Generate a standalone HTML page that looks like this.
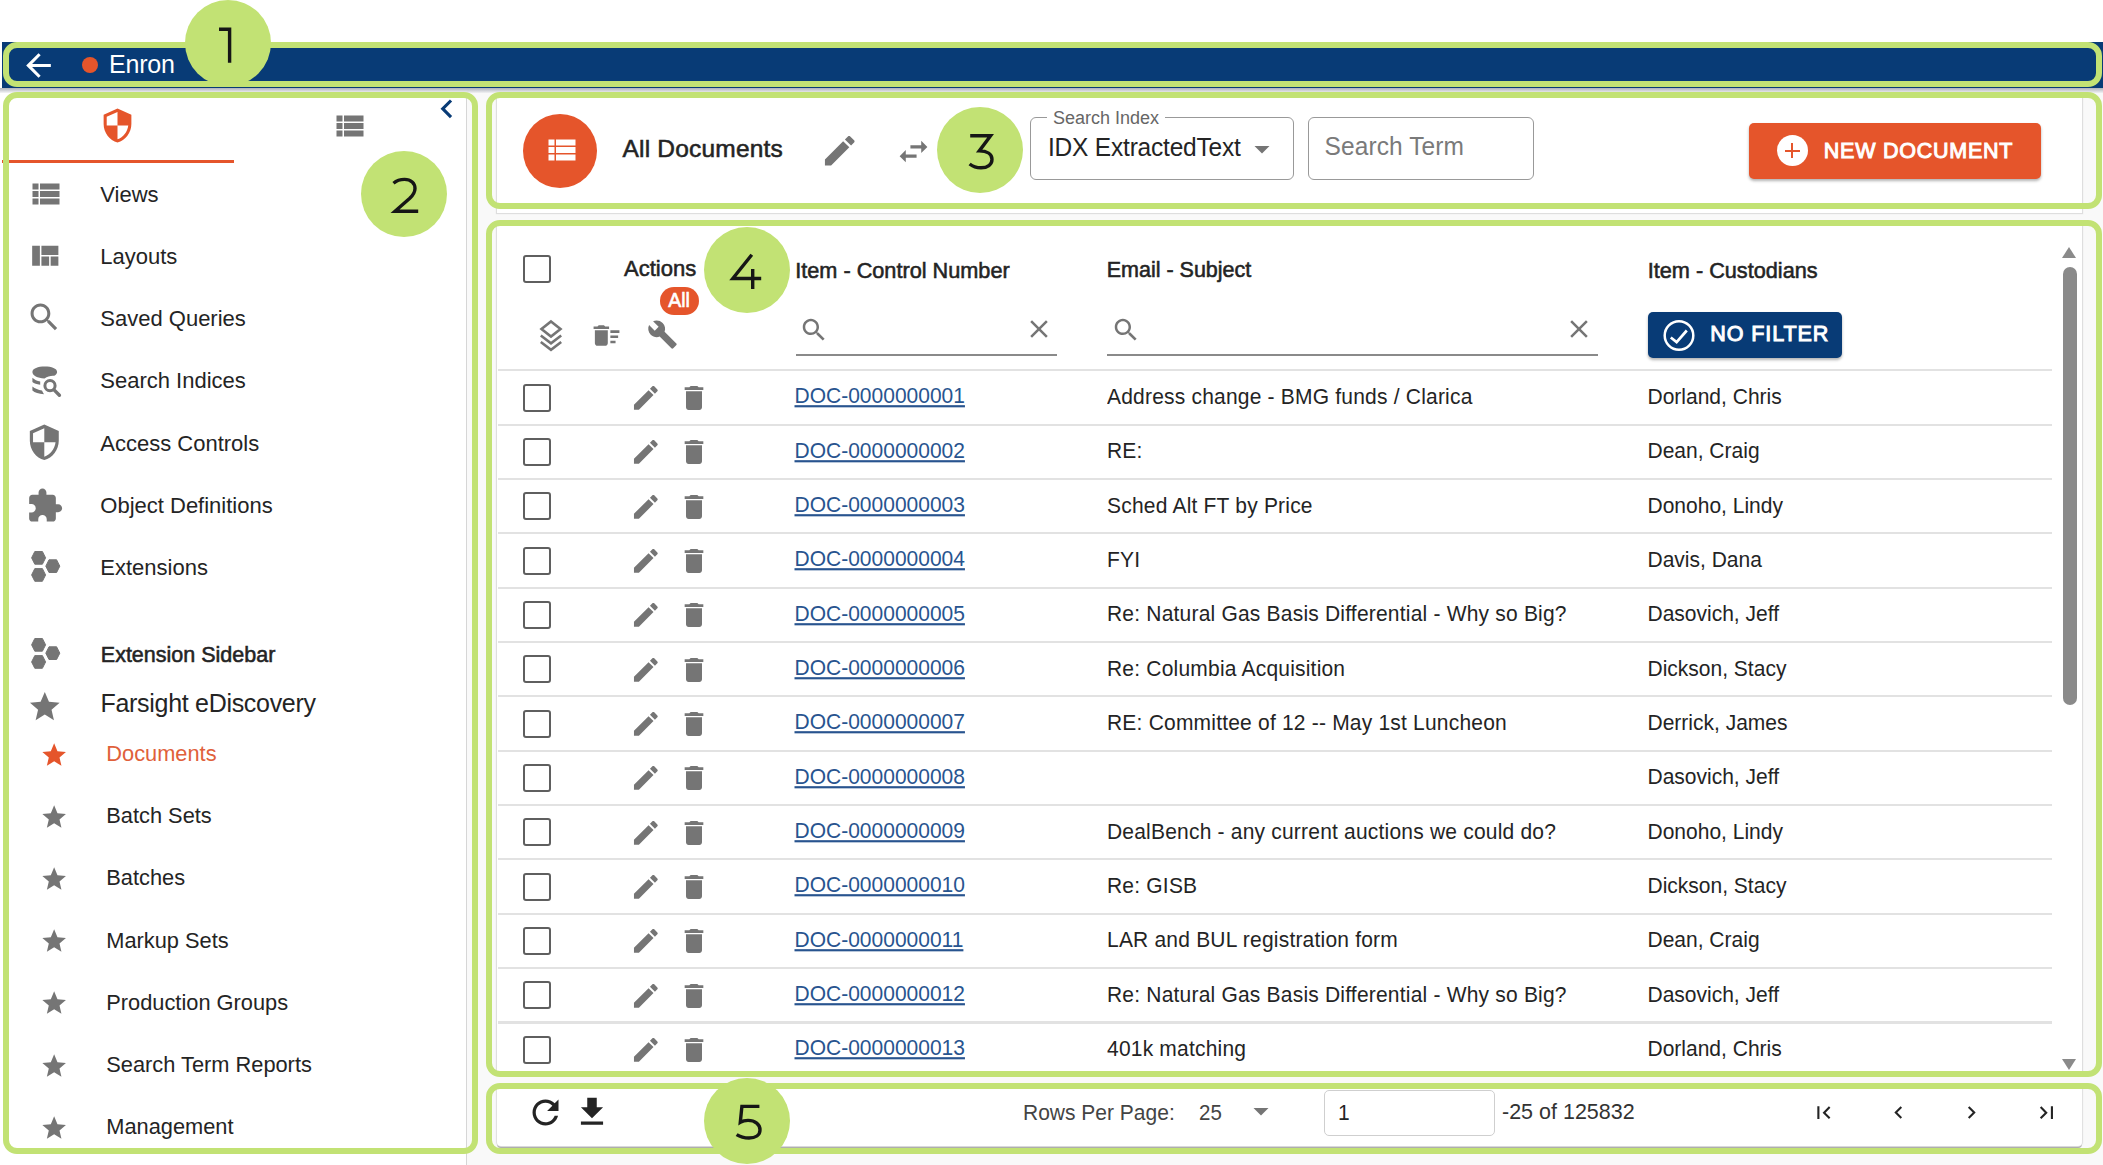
<!DOCTYPE html>
<html><head><meta charset="utf-8">
<style>
*{box-sizing:border-box;margin:0;padding:0}
html,body{width:2103px;height:1165px;overflow:hidden;background:#fff}
body{font-family:"Liberation Sans",sans-serif;color:#212121;position:relative}
.a{position:absolute;display:block}
.t{position:absolute;white-space:nowrap;line-height:1}
.card{position:absolute;background:#fff;box-shadow:0 0 1px 1px #dedede}
.gb{position:absolute;border:6px solid #c2e274;border-radius:14px}
.num{position:absolute;width:86px;height:86px;border-radius:50%;background:#c2e274}
.cb{position:absolute;width:28px;height:28px;border:2.6px solid #5f5f5f;border-radius:3px}
.hl{position:absolute;height:2px;background:#e2e2e2}
</style></head><body>

<div class="a" style="left:467px;top:88px;width:1636px;height:1077px;background:#f9f9f9"></div>
<div class="a" style="left:2px;top:42px;width:2101px;height:46px;background:#083b76"></div>
<div class="a" style="left:0;top:88px;width:2103px;height:5px;background:linear-gradient(#aeb2bb,rgba(230,230,235,.4))"></div>
<svg class="a" style="left:20.2px;top:46.9px;" width="37" height="37" viewBox="0 0 24 24"><path fill="#fff" d="M20 11H7.83l5.59-5.59L12 4l-8 8 8 8 1.41-1.41L7.83 13H20v-2z"/></svg>
<div class="a" style="left:81.7px;top:57.3px;width:16px;height:16px;border-radius:50%;background:#e5552b"></div>
<div class="t" style="left:109.0px;top:51.8px;font-size:25px;font-weight:400;color:#fff;letter-spacing:-0.2px">Enron</div>
<div class="a" style="left:466px;top:93px;width:1px;height:1072px;background:#d6d6d6"></div>
<svg class="a" style="left:99.3px;top:106.8px;" width="37" height="37" viewBox="0 0 24 24"><path fill="#e5552b" d="M12 1L3 5v6c0 5.55 3.84 10.74 9 12 5.16-1.26 9-6.45 9-12V5l-9-4zm0 10.99h7c-.53 4.12-3.28 7.79-7 8.94V12H5V6.3l7-3.11v8.8z"/></svg>
<svg class="a" style="left:332.0px;top:107.8px;" width="36" height="36" viewBox="0 0 24 24"><path fill="#757575" d="M3 14h4v-4H3v4zm0 5h4v-4H3v4zM3 9h4V5H3v4zm5 5h13v-4H8v4zm0 5h13v-4H8v4zM8 5v4h13V5H8z"/></svg>
<div class="a" style="left:2px;top:159.5px;width:232px;height:3.5px;background:#e5552b"></div>
<svg class="a" style="left:428.0px;top:90.0px;" width="37.6" height="37.6" viewBox="0 0 24 24"><path fill="#083b76" d="M15.41 7.41L14 6l-6 6 6 6 1.41-1.41L10.83 12z"/></svg>
<svg class="a" style="left:27.7px;top:175.8px;" width="36" height="36" viewBox="0 0 24 24"><path fill="#757575" d="M3 14h4v-4H3v4zm0 5h4v-4H3v4zM3 9h4V5H3v4zm5 5h13v-4H8v4zm0 5h13v-4H8v4zM8 5v4h13V5H8z"/></svg>
<div class="t" style="left:100.3px;top:184.2px;font-size:22px;font-weight:400;color:#242424;">Views</div>
<svg class="a" style="left:26.1px;top:237.6px;" width="37" height="37" viewBox="0 0 24 24"><path fill="#757575" d="M10 18h5v-6h-5v6zm-6 0h5V5H4v13zm12 0h5v-6h-5v6zM10 5v6h11V5H10z"/></svg>
<div class="t" style="left:100.3px;top:246.4px;font-size:22px;font-weight:400;color:#242424;">Layouts</div>
<svg class="a" style="left:26.3px;top:299.4px;" width="36.5" height="36.5" viewBox="0 0 24 24"><path fill="#757575" d="M15.5 14h-.79l-.28-.27C15.41 12.59 16 11.11 16 9.5 16 5.91 13.09 3 9.5 3S3 5.91 3 9.5 5.91 16 9.5 16c1.61 0 3.09-.59 4.23-1.57l.27.28v.79l5 4.99L20.49 19l-4.99-5zm-6 0C7.01 14 5 11.99 5 9.5S7.01 5 9.5 5 14 7.01 14 9.5 11.99 14 9.5 14z"/></svg>
<div class="t" style="left:100.3px;top:308.1px;font-size:22px;font-weight:400;color:#242424;">Saved Queries</div>
<div class="t" style="left:100.3px;top:369.9px;font-size:22px;font-weight:400;color:#242424;">Search Indices</div>
<svg class="a" style="left:25.4px;top:423.4px;" width="38.6" height="38.6" viewBox="0 0 24 24"><path fill="#757575" d="M12 1L3 5v6c0 5.55 3.84 10.74 9 12 5.16-1.26 9-6.45 9-12V5l-9-4zm0 10.99h7c-.53 4.12-3.28 7.79-7 8.94V12H5V6.3l7-3.11v8.8z"/></svg>
<div class="t" style="left:100.3px;top:433.2px;font-size:22px;font-weight:400;color:#242424;">Access Controls</div>
<svg class="a" style="left:25.7px;top:486.7px;" width="37.7" height="37.7" viewBox="0 0 24 24"><path fill="#757575" d="M20.5 11H19V7c0-1.1-.9-2-2-2h-4V3.5C13 2.12 11.88 1 10.5 1S8 2.12 8 3.5V5H4c-1.1 0-1.99.9-1.99 2v3.8H3.5c1.49 0 2.7 1.21 2.7 2.7s-1.21 2.7-2.7 2.7H2V20c0 1.1.9 2 2 2h3.8v-1.5c0-1.49 1.21-2.7 2.7-2.7 1.49 0 2.7 1.21 2.7 2.7V22H17c1.1 0 2-.9 2-2v-4h1.5c1.38 0 2.5-1.12 2.5-2.5S21.88 11 20.5 11z"/></svg>
<div class="t" style="left:100.3px;top:494.8px;font-size:22px;font-weight:400;color:#242424;">Object Definitions</div>
<div class="t" style="left:100.3px;top:556.8px;font-size:22px;font-weight:400;color:#242424;">Extensions</div>
<svg class="a" style="left:30.9px;top:551.4px" width="31" height="32" viewBox="0 0 31 32"><g fill="#757575" stroke="#757575" stroke-width="1" stroke-linejoin="round"><path d="M3.8 .5h7.6l3.2 6.35-3.2 6.35H3.8L.6 6.85z"/><path d="M3.8 17.6h7.6l3.2 6.35-3.2 6.35H3.8L.6 23.95z"/><path d="M18 8.8h7.6l3.2 6.35-3.2 6.35H18l-3.2-6.35z"/></g></svg>
<svg class="a" style="left:30.6px;top:638.4px" width="31" height="32" viewBox="0 0 31 32"><g fill="#757575" stroke="#757575" stroke-width="1" stroke-linejoin="round"><path d="M3.8 .5h7.6l3.2 6.35-3.2 6.35H3.8L.6 6.85z"/><path d="M3.8 17.6h7.6l3.2 6.35-3.2 6.35H3.8L.6 23.95z"/><path d="M18 8.8h7.6l3.2 6.35-3.2 6.35H18l-3.2-6.35z"/></g></svg>
<svg class="a" style="left:20px;top:355px" width="50" height="50" viewBox="0 0 50 50"><g fill="#757575"><path d="M12.4 17C12.4 13.6 18 11.6 24.8 11.6S37.1 13.6 37.1 17c0 1.5-1 2.8-2.8 3.8-3.5-.3-6.8.6-9.8 2.6C17.5 23.2 12.4 20.6 12.4 17z"/><path d="M12.4 22.8c2 2 4.8 3.3 7.8 3.8v3.2c-3.4-.5-6.2-1.5-7.8-2.8z"/><path d="M12.4 31.6c2.5 2 6 3.4 9.6 4 .6 1.3 1.3 2.6 2 3.7-5.2-.4-9.4-1.8-11.6-3.8z"/></g><circle cx="30" cy="30.7" r="5.1" fill="none" stroke="#757575" stroke-width="3"/><path d="M33.8 34.6l5.6 5.6" stroke="#757575" stroke-width="3.4" stroke-linecap="round"/></svg>
<div class="t" style="left:100.8px;top:644.5px;font-size:21.5px;font-weight:400;color:#242424;-webkit-text-stroke:0.55px #242424;">Extension Sidebar</div>
<svg class="a" style="left:26.9px;top:688.6px;" width="35.6" height="35.6" viewBox="0 0 24 24"><path fill="#757575" d="M12 17.27L18.18 21l-1.64-7.03L22 9.24l-7.19-.61L12 2 9.19 8.63 2 9.24l5.46 4.73L5.82 21z"/></svg>
<div class="t" style="left:100.5px;top:691.0px;font-size:25px;font-weight:400;color:#242424;letter-spacing:-0.3px">Farsight eDiscovery</div>
<svg class="a" style="left:39.6px;top:741.0px;" width="28.3" height="28.3" viewBox="0 0 24 24"><path fill="#e5552b" d="M12 17.27L18.18 21l-1.64-7.03L22 9.24l-7.19-.61L12 2 9.19 8.63 2 9.24l5.46 4.73L5.82 21z"/></svg>
<div class="t" style="left:106.3px;top:743.2px;font-size:21.8px;font-weight:400;color:#e0603a;">Documents</div>
<svg class="a" style="left:39.6px;top:803.1px;" width="28.3" height="28.3" viewBox="0 0 24 24"><path fill="#757575" d="M12 17.27L18.18 21l-1.64-7.03L22 9.24l-7.19-.61L12 2 9.19 8.63 2 9.24l5.46 4.73L5.82 21z"/></svg>
<div class="t" style="left:106.3px;top:805.3px;font-size:21.8px;font-weight:400;color:#242424;">Batch Sets</div>
<svg class="a" style="left:39.6px;top:865.2px;" width="28.3" height="28.3" viewBox="0 0 24 24"><path fill="#757575" d="M12 17.27L18.18 21l-1.64-7.03L22 9.24l-7.19-.61L12 2 9.19 8.63 2 9.24l5.46 4.73L5.82 21z"/></svg>
<div class="t" style="left:106.3px;top:867.4px;font-size:21.8px;font-weight:400;color:#242424;">Batches</div>
<svg class="a" style="left:39.6px;top:927.3px;" width="28.3" height="28.3" viewBox="0 0 24 24"><path fill="#757575" d="M12 17.27L18.18 21l-1.64-7.03L22 9.24l-7.19-.61L12 2 9.19 8.63 2 9.24l5.46 4.73L5.82 21z"/></svg>
<div class="t" style="left:106.3px;top:929.5px;font-size:21.8px;font-weight:400;color:#242424;">Markup Sets</div>
<svg class="a" style="left:39.6px;top:989.4px;" width="28.3" height="28.3" viewBox="0 0 24 24"><path fill="#757575" d="M12 17.27L18.18 21l-1.64-7.03L22 9.24l-7.19-.61L12 2 9.19 8.63 2 9.24l5.46 4.73L5.82 21z"/></svg>
<div class="t" style="left:106.3px;top:991.6px;font-size:21.8px;font-weight:400;color:#242424;">Production Groups</div>
<svg class="a" style="left:39.6px;top:1051.5px;" width="28.3" height="28.3" viewBox="0 0 24 24"><path fill="#757575" d="M12 17.27L18.18 21l-1.64-7.03L22 9.24l-7.19-.61L12 2 9.19 8.63 2 9.24l5.46 4.73L5.82 21z"/></svg>
<div class="t" style="left:106.3px;top:1053.7px;font-size:21.8px;font-weight:400;color:#242424;">Search Term Reports</div>
<svg class="a" style="left:39.6px;top:1113.6px;" width="28.3" height="28.3" viewBox="0 0 24 24"><path fill="#757575" d="M12 17.27L18.18 21l-1.64-7.03L22 9.24l-7.19-.61L12 2 9.19 8.63 2 9.24l5.46 4.73L5.82 21z"/></svg>
<div class="t" style="left:106.3px;top:1115.8px;font-size:21.8px;font-weight:400;color:#242424;">Management</div>
<div class="card" style="left:497px;top:96px;width:1585px;height:117px"></div>
<div class="a" style="left:523.4px;top:113.6px;width:74px;height:74px;border-radius:50%;background:#e5552b"></div>
<svg class="a" style="left:543.5px;top:131.8px;" width="36" height="36" viewBox="0 0 24 24"><path fill="#fff" d="M3 14h4v-4H3v4zm0 5h4v-4H3v4zM3 9h4V5H3v4zm5 5h13v-4H8v4zm0 5h13v-4H8v4zM8 5v4h13V5H8z"/></svg>
<div class="t" style="left:622.5px;top:137.2px;font-size:24.5px;font-weight:400;color:#242424;-webkit-text-stroke:0.55px #242424;letter-spacing:0.2px">All Documents</div>
<svg class="a" style="left:820.0px;top:130.8px;" width="39.5" height="39.5" viewBox="0 0 24 24"><path fill="#757575" d="M3 17.25V21h3.75L17.81 9.94l-3.75-3.75L3 17.25zM20.71 7.04c.39-.39.39-1.02 0-1.41l-2.34-2.34c-.39-.39-1.02-.39-1.41 0l-1.83 1.83 3.75 3.75 1.83-1.83z"/></svg>
<svg class="a" style="left:895.2px;top:133.2px;" width="37" height="37" viewBox="0 0 24 24"><path fill="#757575" d="M6.99 11L3 15l3.99 4v-3H14v-2H6.99v-3zM21 9l-3.99-4v3H10v2h7.01v3L21 9z"/></svg>
<div class="a" style="left:1030px;top:117px;width:264px;height:63px;border:1.8px solid #999;border-radius:6px"></div>
<div class="a" style="left:1047px;top:110px;width:118px;height:10px;background:#fff"></div>
<div class="t" style="left:1053.0px;top:109.1px;font-size:18px;font-weight:400;color:#666;">Search Index</div>
<div class="t" style="left:1048.0px;top:136.2px;font-size:24.5px;font-weight:400;color:#242424;transform:scaleY(1.07);transform-origin:0 85%;letter-spacing:-0.2px">IDX ExtractedText</div>
<svg class="a" style="left:1250.2px;top:136.6px;transform:scale(1.5);transform-origin:50% 50%" width="24" height="24" viewBox="0 0 24 24"><path fill="#757575" d="M7 10l5 5 5-5z"/></svg>
<div class="a" style="left:1308px;top:117px;width:226px;height:63px;border:1.8px solid #999;border-radius:6px"></div>
<div class="t" style="left:1324.5px;top:135.2px;font-size:24.5px;font-weight:400;color:#7a7a7a;transform:scaleY(1.07);transform-origin:0 85%;letter-spacing:0.1px">Search Term</div>
<div class="a" style="left:1749px;top:123px;width:292px;height:56px;border-radius:5px;background:#e5552b;box-shadow:0 2px 3px rgba(0,0,0,.3)"></div>
<div class="a" style="left:1776.5px;top:135.2px;width:31px;height:31px;border-radius:50%;background:#fff"></div>
<div class="a" style="left:1784.5px;top:149.6px;width:15.5px;height:2.3px;background:#e5552b"></div>
<div class="a" style="left:1791px;top:143px;width:2.3px;height:15.2px;background:#e5552b"></div>
<div class="t" style="left:1823.8px;top:140.5px;font-size:21.5px;font-weight:400;color:#fff;-webkit-text-stroke:1.0px #fff;letter-spacing:0.75px">NEW DOCUMENT</div>
<div class="card" style="left:497px;top:224px;width:1585px;height:848px"></div>
<div class="cb" style="left:523.2px;top:255px"></div>
<div class="t" style="left:624.0px;top:258.3px;font-size:22px;font-weight:400;color:#242424;-webkit-text-stroke:0.55px #242424;">Actions</div>
<div class="a" style="left:660.4px;top:287.2px;width:39px;height:28.2px;border-radius:14px;background:#e5552b"></div>
<div class="t" style="left:668.2px;top:290.9px;font-size:19.5px;font-weight:400;color:#fff;-webkit-text-stroke:0.6px #fff;">All</div>
<svg class="a" style="left:538px;top:319px" width="26" height="33" viewBox="0 0 26 33"><g fill="none" stroke="#757575" stroke-width="2.6" stroke-linejoin="miter"><path d="M13 2.5L22.5 10 13 17.5 3.5 10z"/><path d="M2.8 16.5L13 24.3 23.2 16.5"/><path d="M2.8 23L13 30.8 23.2 23"/></g></svg>
<svg class="a" style="left:591.4px;top:320.3px;" width="31" height="31" viewBox="0 0 24 24"><path fill="#757575" d="M15 16h4v2h-4zm0-8h7v2h-7zm0 4h6v2h-6zM3 18c0 1.1.9 2 2 2h6c1.1 0 2-.9 2-2V8H3v10zM14 5h-3l-1-1H6L5 5H2v2h12z"/></svg>
<svg class="a" style="left:647.3px;top:318.7px;" width="31" height="31" viewBox="0 0 24 24"><path fill="#757575" d="M22.7 19l-9.1-9.1c.9-2.3.4-5-1.5-6.9-2-2-5-2.4-7.4-1.3L9 6 6 9 1.6 4.7C.4 7.1.9 10.1 2.9 12.1c1.9 1.9 4.6 2.4 6.9 1.5l9.1 9.1c.4.4 1 .4 1.4 0l2.3-2.3c.5-.4.5-1.1.1-1.4z"/></svg>
<div class="t" style="left:795.2px;top:259.9px;font-size:21.7px;font-weight:400;color:#242424;-webkit-text-stroke:0.55px #242424;">Item - Control Number</div>
<div class="t" style="left:1106.7px;top:260.0px;font-size:21.5px;font-weight:400;color:#242424;-webkit-text-stroke:0.55px #242424;">Email - Subject</div>
<div class="t" style="left:1647.7px;top:259.8px;font-size:21.7px;font-weight:400;color:#242424;-webkit-text-stroke:0.55px #242424;">Item - Custodians</div>
<svg class="a" style="left:798.5px;top:314.8px;" width="30" height="30" viewBox="0 0 24 24"><path fill="#757575" d="M15.5 14h-.79l-.28-.27C15.41 12.59 16 11.11 16 9.5 16 5.91 13.09 3 9.5 3S3 5.91 3 9.5 5.91 16 9.5 16c1.61 0 3.09-.59 4.23-1.57l.27.28v.79l5 4.99L20.49 19l-4.99-5zm-6 0C7.01 14 5 11.99 5 9.5S7.01 5 9.5 5 14 7.01 14 9.5 11.99 14 9.5 14z"/></svg>
<svg class="a" style="left:1024.0px;top:314.2px;" width="30" height="30" viewBox="0 0 24 24"><path fill="#757575" d="M19 6.41L17.59 5 12 10.59 6.41 5 5 6.41 10.59 12 5 17.59 6.41 19 12 13.41 17.59 19 19 17.59 13.41 12z"/></svg>
<div class="a" style="left:796px;top:354px;width:261px;height:2px;background:#8a8a8a"></div>
<svg class="a" style="left:1111.2px;top:314.8px;" width="30" height="30" viewBox="0 0 24 24"><path fill="#757575" d="M15.5 14h-.79l-.28-.27C15.41 12.59 16 11.11 16 9.5 16 5.91 13.09 3 9.5 3S3 5.91 3 9.5 5.91 16 9.5 16c1.61 0 3.09-.59 4.23-1.57l.27.28v.79l5 4.99L20.49 19l-4.99-5zm-6 0C7.01 14 5 11.99 5 9.5S7.01 5 9.5 5 14 7.01 14 9.5 11.99 14 9.5 14z"/></svg>
<svg class="a" style="left:1564.0px;top:314.2px;" width="30" height="30" viewBox="0 0 24 24"><path fill="#757575" d="M19 6.41L17.59 5 12 10.59 6.41 5 5 6.41 10.59 12 5 17.59 6.41 19 12 13.41 17.59 19 19 17.59 13.41 12z"/></svg>
<div class="a" style="left:1107px;top:354px;width:491px;height:2px;background:#8a8a8a"></div>
<div class="a" style="left:1648px;top:312.3px;width:194px;height:46px;border-radius:5px;background:#083b76;box-shadow:0 2px 3px rgba(0,0,0,.3)"></div>
<svg class="a" style="left:1661px;top:318px" width="36" height="36" viewBox="0 0 36 36"><circle cx="18" cy="17.5" r="14.3" fill="none" stroke="#fff" stroke-width="2.5"/><path d="M9.8 19.5l5.8 4.6 10.2-11.6" fill="none" stroke="#fff" stroke-width="2.7"/></svg>
<div class="t" style="left:1710.3px;top:323.5px;font-size:21.5px;font-weight:400;color:#fff;-webkit-text-stroke:1.0px #fff;letter-spacing:0.9px">NO FILTER</div>
<div class="hl" style="left:498px;top:369px;width:1554px"></div>
<div class="a" style="left:2062px;top:247px;width:0;height:0;border-left:7.5px solid transparent;border-right:7.5px solid transparent;border-bottom:11px solid #8a8a8a"></div>
<div class="a" style="left:2062.5px;top:267px;width:14.5px;height:438px;border-radius:7px;background:#8a8a8a"></div>
<div class="a" style="left:2062px;top:1059px;width:0;height:0;border-left:7.5px solid transparent;border-right:7.5px solid transparent;border-top:11px solid #8a8a8a"></div>
<div class="cb" style="left:523.3px;top:383.5px"></div>
<svg class="a" style="left:629.8px;top:382.0px;" width="31.7" height="31.7" viewBox="0 0 24 24"><path fill="#757575" d="M3 17.25V21h3.75L17.81 9.94l-3.75-3.75L3 17.25zM20.71 7.04c.39-.39.39-1.02 0-1.41l-2.34-2.34c-.39-.39-1.02-.39-1.41 0l-1.83 1.83 3.75 3.75 1.83-1.83z"/></svg>
<svg class="a" style="left:678.0px;top:382.0px;" width="32" height="32" viewBox="0 0 24 24"><path fill="#757575" d="M6 19c0 1.1.9 2 2 2h8c1.1 0 2-.9 2-2V7H6v12zM19 4h-3.5l-1-1h-5l-1 1H5v2h14V4z"/></svg>
<div class="t" style="left:794.5px;top:385.4px;font-size:21px;font-weight:400;color:#28548f;transform:scaleY(1.08);transform-origin:0 85%;text-decoration:underline;text-decoration-thickness:1.8px;text-underline-offset:1.6px">DOC-0000000001</div>
<div class="t" style="left:1107.0px;top:385.9px;font-size:21px;font-weight:400;color:#242424;transform:scaleY(1.07);transform-origin:0 85%;letter-spacing:0.2px">Address change - BMG funds / Clarica</div>
<div class="t" style="left:1647.5px;top:385.9px;font-size:21px;font-weight:400;color:#242424;transform:scaleY(1.08);transform-origin:0 85%;">Dorland, Chris</div>
<div class="hl" style="left:498px;top:423.6px;width:1554px"></div>
<div class="cb" style="left:523.3px;top:437.8px"></div>
<svg class="a" style="left:629.8px;top:436.3px;" width="31.7" height="31.7" viewBox="0 0 24 24"><path fill="#757575" d="M3 17.25V21h3.75L17.81 9.94l-3.75-3.75L3 17.25zM20.71 7.04c.39-.39.39-1.02 0-1.41l-2.34-2.34c-.39-.39-1.02-.39-1.41 0l-1.83 1.83 3.75 3.75 1.83-1.83z"/></svg>
<svg class="a" style="left:678.0px;top:436.3px;" width="32" height="32" viewBox="0 0 24 24"><path fill="#757575" d="M6 19c0 1.1.9 2 2 2h8c1.1 0 2-.9 2-2V7H6v12zM19 4h-3.5l-1-1h-5l-1 1H5v2h14V4z"/></svg>
<div class="t" style="left:794.5px;top:439.8px;font-size:21px;font-weight:400;color:#28548f;transform:scaleY(1.08);transform-origin:0 85%;text-decoration:underline;text-decoration-thickness:1.8px;text-underline-offset:1.6px">DOC-0000000002</div>
<div class="t" style="left:1107.0px;top:440.3px;font-size:21px;font-weight:400;color:#242424;transform:scaleY(1.07);transform-origin:0 85%;letter-spacing:0.2px">RE:</div>
<div class="t" style="left:1647.5px;top:440.3px;font-size:21px;font-weight:400;color:#242424;transform:scaleY(1.08);transform-origin:0 85%;">Dean, Craig</div>
<div class="hl" style="left:498px;top:478.0px;width:1554px"></div>
<div class="cb" style="left:523.3px;top:492.2px"></div>
<svg class="a" style="left:629.8px;top:490.7px;" width="31.7" height="31.7" viewBox="0 0 24 24"><path fill="#757575" d="M3 17.25V21h3.75L17.81 9.94l-3.75-3.75L3 17.25zM20.71 7.04c.39-.39.39-1.02 0-1.41l-2.34-2.34c-.39-.39-1.02-.39-1.41 0l-1.83 1.83 3.75 3.75 1.83-1.83z"/></svg>
<svg class="a" style="left:678.0px;top:490.7px;" width="32" height="32" viewBox="0 0 24 24"><path fill="#757575" d="M6 19c0 1.1.9 2 2 2h8c1.1 0 2-.9 2-2V7H6v12zM19 4h-3.5l-1-1h-5l-1 1H5v2h14V4z"/></svg>
<div class="t" style="left:794.5px;top:494.1px;font-size:21px;font-weight:400;color:#28548f;transform:scaleY(1.08);transform-origin:0 85%;text-decoration:underline;text-decoration-thickness:1.8px;text-underline-offset:1.6px">DOC-0000000003</div>
<div class="t" style="left:1107.0px;top:494.6px;font-size:21px;font-weight:400;color:#242424;transform:scaleY(1.07);transform-origin:0 85%;letter-spacing:0.2px">Sched Alt FT by Price</div>
<div class="t" style="left:1647.5px;top:494.6px;font-size:21px;font-weight:400;color:#242424;transform:scaleY(1.08);transform-origin:0 85%;">Donoho, Lindy</div>
<div class="hl" style="left:498px;top:532.3px;width:1554px"></div>
<div class="cb" style="left:523.3px;top:546.5px"></div>
<svg class="a" style="left:629.8px;top:545.0px;" width="31.7" height="31.7" viewBox="0 0 24 24"><path fill="#757575" d="M3 17.25V21h3.75L17.81 9.94l-3.75-3.75L3 17.25zM20.71 7.04c.39-.39.39-1.02 0-1.41l-2.34-2.34c-.39-.39-1.02-.39-1.41 0l-1.83 1.83 3.75 3.75 1.83-1.83z"/></svg>
<svg class="a" style="left:678.0px;top:545.0px;" width="32" height="32" viewBox="0 0 24 24"><path fill="#757575" d="M6 19c0 1.1.9 2 2 2h8c1.1 0 2-.9 2-2V7H6v12zM19 4h-3.5l-1-1h-5l-1 1H5v2h14V4z"/></svg>
<div class="t" style="left:794.5px;top:548.4px;font-size:21px;font-weight:400;color:#28548f;transform:scaleY(1.08);transform-origin:0 85%;text-decoration:underline;text-decoration-thickness:1.8px;text-underline-offset:1.6px">DOC-0000000004</div>
<div class="t" style="left:1107.0px;top:548.9px;font-size:21px;font-weight:400;color:#242424;transform:scaleY(1.07);transform-origin:0 85%;letter-spacing:0.2px">FYI</div>
<div class="t" style="left:1647.5px;top:548.9px;font-size:21px;font-weight:400;color:#242424;transform:scaleY(1.08);transform-origin:0 85%;">Davis, Dana</div>
<div class="hl" style="left:498px;top:586.6px;width:1554px"></div>
<div class="cb" style="left:523.3px;top:600.8px"></div>
<svg class="a" style="left:629.8px;top:599.3px;" width="31.7" height="31.7" viewBox="0 0 24 24"><path fill="#757575" d="M3 17.25V21h3.75L17.81 9.94l-3.75-3.75L3 17.25zM20.71 7.04c.39-.39.39-1.02 0-1.41l-2.34-2.34c-.39-.39-1.02-.39-1.41 0l-1.83 1.83 3.75 3.75 1.83-1.83z"/></svg>
<svg class="a" style="left:678.0px;top:599.3px;" width="32" height="32" viewBox="0 0 24 24"><path fill="#757575" d="M6 19c0 1.1.9 2 2 2h8c1.1 0 2-.9 2-2V7H6v12zM19 4h-3.5l-1-1h-5l-1 1H5v2h14V4z"/></svg>
<div class="t" style="left:794.5px;top:602.8px;font-size:21px;font-weight:400;color:#28548f;transform:scaleY(1.08);transform-origin:0 85%;text-decoration:underline;text-decoration-thickness:1.8px;text-underline-offset:1.6px">DOC-0000000005</div>
<div class="t" style="left:1107.0px;top:603.3px;font-size:21px;font-weight:400;color:#242424;transform:scaleY(1.07);transform-origin:0 85%;letter-spacing:0.2px">Re: Natural Gas Basis Differential - Why so Big?</div>
<div class="t" style="left:1647.5px;top:603.3px;font-size:21px;font-weight:400;color:#242424;transform:scaleY(1.08);transform-origin:0 85%;">Dasovich, Jeff</div>
<div class="hl" style="left:498px;top:641.0px;width:1554px"></div>
<div class="cb" style="left:523.3px;top:655.1px"></div>
<svg class="a" style="left:629.8px;top:653.6px;" width="31.7" height="31.7" viewBox="0 0 24 24"><path fill="#757575" d="M3 17.25V21h3.75L17.81 9.94l-3.75-3.75L3 17.25zM20.71 7.04c.39-.39.39-1.02 0-1.41l-2.34-2.34c-.39-.39-1.02-.39-1.41 0l-1.83 1.83 3.75 3.75 1.83-1.83z"/></svg>
<svg class="a" style="left:678.0px;top:653.6px;" width="32" height="32" viewBox="0 0 24 24"><path fill="#757575" d="M6 19c0 1.1.9 2 2 2h8c1.1 0 2-.9 2-2V7H6v12zM19 4h-3.5l-1-1h-5l-1 1H5v2h14V4z"/></svg>
<div class="t" style="left:794.5px;top:657.1px;font-size:21px;font-weight:400;color:#28548f;transform:scaleY(1.08);transform-origin:0 85%;text-decoration:underline;text-decoration-thickness:1.8px;text-underline-offset:1.6px">DOC-0000000006</div>
<div class="t" style="left:1107.0px;top:657.6px;font-size:21px;font-weight:400;color:#242424;transform:scaleY(1.07);transform-origin:0 85%;letter-spacing:0.2px">Re: Columbia Acquisition</div>
<div class="t" style="left:1647.5px;top:657.6px;font-size:21px;font-weight:400;color:#242424;transform:scaleY(1.08);transform-origin:0 85%;">Dickson, Stacy</div>
<div class="hl" style="left:498px;top:695.3px;width:1554px"></div>
<div class="cb" style="left:523.3px;top:709.5px"></div>
<svg class="a" style="left:629.8px;top:708.0px;" width="31.7" height="31.7" viewBox="0 0 24 24"><path fill="#757575" d="M3 17.25V21h3.75L17.81 9.94l-3.75-3.75L3 17.25zM20.71 7.04c.39-.39.39-1.02 0-1.41l-2.34-2.34c-.39-.39-1.02-.39-1.41 0l-1.83 1.83 3.75 3.75 1.83-1.83z"/></svg>
<svg class="a" style="left:678.0px;top:708.0px;" width="32" height="32" viewBox="0 0 24 24"><path fill="#757575" d="M6 19c0 1.1.9 2 2 2h8c1.1 0 2-.9 2-2V7H6v12zM19 4h-3.5l-1-1h-5l-1 1H5v2h14V4z"/></svg>
<div class="t" style="left:794.5px;top:711.4px;font-size:21px;font-weight:400;color:#28548f;transform:scaleY(1.08);transform-origin:0 85%;text-decoration:underline;text-decoration-thickness:1.8px;text-underline-offset:1.6px">DOC-0000000007</div>
<div class="t" style="left:1107.0px;top:711.9px;font-size:21px;font-weight:400;color:#242424;transform:scaleY(1.07);transform-origin:0 85%;letter-spacing:0.2px">RE: Committee of 12 -- May 1st Luncheon</div>
<div class="t" style="left:1647.5px;top:711.9px;font-size:21px;font-weight:400;color:#242424;transform:scaleY(1.08);transform-origin:0 85%;">Derrick, James</div>
<div class="hl" style="left:498px;top:749.6px;width:1554px"></div>
<div class="cb" style="left:523.3px;top:763.8px"></div>
<svg class="a" style="left:629.8px;top:762.3px;" width="31.7" height="31.7" viewBox="0 0 24 24"><path fill="#757575" d="M3 17.25V21h3.75L17.81 9.94l-3.75-3.75L3 17.25zM20.71 7.04c.39-.39.39-1.02 0-1.41l-2.34-2.34c-.39-.39-1.02-.39-1.41 0l-1.83 1.83 3.75 3.75 1.83-1.83z"/></svg>
<svg class="a" style="left:678.0px;top:762.3px;" width="32" height="32" viewBox="0 0 24 24"><path fill="#757575" d="M6 19c0 1.1.9 2 2 2h8c1.1 0 2-.9 2-2V7H6v12zM19 4h-3.5l-1-1h-5l-1 1H5v2h14V4z"/></svg>
<div class="t" style="left:794.5px;top:765.8px;font-size:21px;font-weight:400;color:#28548f;transform:scaleY(1.08);transform-origin:0 85%;text-decoration:underline;text-decoration-thickness:1.8px;text-underline-offset:1.6px">DOC-0000000008</div>
<div class="t" style="left:1647.5px;top:766.3px;font-size:21px;font-weight:400;color:#242424;transform:scaleY(1.08);transform-origin:0 85%;">Dasovich, Jeff</div>
<div class="hl" style="left:498px;top:803.9px;width:1554px"></div>
<div class="cb" style="left:523.3px;top:818.1px"></div>
<svg class="a" style="left:629.8px;top:816.6px;" width="31.7" height="31.7" viewBox="0 0 24 24"><path fill="#757575" d="M3 17.25V21h3.75L17.81 9.94l-3.75-3.75L3 17.25zM20.71 7.04c.39-.39.39-1.02 0-1.41l-2.34-2.34c-.39-.39-1.02-.39-1.41 0l-1.83 1.83 3.75 3.75 1.83-1.83z"/></svg>
<svg class="a" style="left:678.0px;top:816.6px;" width="32" height="32" viewBox="0 0 24 24"><path fill="#757575" d="M6 19c0 1.1.9 2 2 2h8c1.1 0 2-.9 2-2V7H6v12zM19 4h-3.5l-1-1h-5l-1 1H5v2h14V4z"/></svg>
<div class="t" style="left:794.5px;top:820.1px;font-size:21px;font-weight:400;color:#28548f;transform:scaleY(1.08);transform-origin:0 85%;text-decoration:underline;text-decoration-thickness:1.8px;text-underline-offset:1.6px">DOC-0000000009</div>
<div class="t" style="left:1107.0px;top:820.6px;font-size:21px;font-weight:400;color:#242424;transform:scaleY(1.07);transform-origin:0 85%;letter-spacing:0.2px">DealBench - any current auctions we could do?</div>
<div class="t" style="left:1647.5px;top:820.6px;font-size:21px;font-weight:400;color:#242424;transform:scaleY(1.08);transform-origin:0 85%;">Donoho, Lindy</div>
<div class="hl" style="left:498px;top:858.3px;width:1554px"></div>
<div class="cb" style="left:523.3px;top:872.5px"></div>
<svg class="a" style="left:629.8px;top:871.0px;" width="31.7" height="31.7" viewBox="0 0 24 24"><path fill="#757575" d="M3 17.25V21h3.75L17.81 9.94l-3.75-3.75L3 17.25zM20.71 7.04c.39-.39.39-1.02 0-1.41l-2.34-2.34c-.39-.39-1.02-.39-1.41 0l-1.83 1.83 3.75 3.75 1.83-1.83z"/></svg>
<svg class="a" style="left:678.0px;top:871.0px;" width="32" height="32" viewBox="0 0 24 24"><path fill="#757575" d="M6 19c0 1.1.9 2 2 2h8c1.1 0 2-.9 2-2V7H6v12zM19 4h-3.5l-1-1h-5l-1 1H5v2h14V4z"/></svg>
<div class="t" style="left:794.5px;top:874.4px;font-size:21px;font-weight:400;color:#28548f;transform:scaleY(1.08);transform-origin:0 85%;text-decoration:underline;text-decoration-thickness:1.8px;text-underline-offset:1.6px">DOC-0000000010</div>
<div class="t" style="left:1107.0px;top:874.9px;font-size:21px;font-weight:400;color:#242424;transform:scaleY(1.07);transform-origin:0 85%;letter-spacing:0.2px">Re: GISB</div>
<div class="t" style="left:1647.5px;top:874.9px;font-size:21px;font-weight:400;color:#242424;transform:scaleY(1.08);transform-origin:0 85%;">Dickson, Stacy</div>
<div class="hl" style="left:498px;top:912.6px;width:1554px"></div>
<div class="cb" style="left:523.3px;top:926.8px"></div>
<svg class="a" style="left:629.8px;top:925.3px;" width="31.7" height="31.7" viewBox="0 0 24 24"><path fill="#757575" d="M3 17.25V21h3.75L17.81 9.94l-3.75-3.75L3 17.25zM20.71 7.04c.39-.39.39-1.02 0-1.41l-2.34-2.34c-.39-.39-1.02-.39-1.41 0l-1.83 1.83 3.75 3.75 1.83-1.83z"/></svg>
<svg class="a" style="left:678.0px;top:925.3px;" width="32" height="32" viewBox="0 0 24 24"><path fill="#757575" d="M6 19c0 1.1.9 2 2 2h8c1.1 0 2-.9 2-2V7H6v12zM19 4h-3.5l-1-1h-5l-1 1H5v2h14V4z"/></svg>
<div class="t" style="left:794.5px;top:928.7px;font-size:21px;font-weight:400;color:#28548f;transform:scaleY(1.08);transform-origin:0 85%;text-decoration:underline;text-decoration-thickness:1.8px;text-underline-offset:1.6px">DOC-0000000011</div>
<div class="t" style="left:1107.0px;top:929.2px;font-size:21px;font-weight:400;color:#242424;transform:scaleY(1.07);transform-origin:0 85%;letter-spacing:0.2px">LAR and BUL registration form</div>
<div class="t" style="left:1647.5px;top:929.2px;font-size:21px;font-weight:400;color:#242424;transform:scaleY(1.08);transform-origin:0 85%;">Dean, Craig</div>
<div class="hl" style="left:498px;top:966.9px;width:1554px"></div>
<div class="cb" style="left:523.3px;top:981.1px"></div>
<svg class="a" style="left:629.8px;top:979.6px;" width="31.7" height="31.7" viewBox="0 0 24 24"><path fill="#757575" d="M3 17.25V21h3.75L17.81 9.94l-3.75-3.75L3 17.25zM20.71 7.04c.39-.39.39-1.02 0-1.41l-2.34-2.34c-.39-.39-1.02-.39-1.41 0l-1.83 1.83 3.75 3.75 1.83-1.83z"/></svg>
<svg class="a" style="left:678.0px;top:979.6px;" width="32" height="32" viewBox="0 0 24 24"><path fill="#757575" d="M6 19c0 1.1.9 2 2 2h8c1.1 0 2-.9 2-2V7H6v12zM19 4h-3.5l-1-1h-5l-1 1H5v2h14V4z"/></svg>
<div class="t" style="left:794.5px;top:983.1px;font-size:21px;font-weight:400;color:#28548f;transform:scaleY(1.08);transform-origin:0 85%;text-decoration:underline;text-decoration-thickness:1.8px;text-underline-offset:1.6px">DOC-0000000012</div>
<div class="t" style="left:1107.0px;top:983.6px;font-size:21px;font-weight:400;color:#242424;transform:scaleY(1.07);transform-origin:0 85%;letter-spacing:0.2px">Re: Natural Gas Basis Differential - Why so Big?</div>
<div class="t" style="left:1647.5px;top:983.6px;font-size:21px;font-weight:400;color:#242424;transform:scaleY(1.08);transform-origin:0 85%;">Dasovich, Jeff</div>
<div class="hl" style="left:498px;top:1021.3px;width:1554px"></div>
<div class="cb" style="left:523.3px;top:1035.5px"></div>
<svg class="a" style="left:629.8px;top:1034.0px;" width="31.7" height="31.7" viewBox="0 0 24 24"><path fill="#757575" d="M3 17.25V21h3.75L17.81 9.94l-3.75-3.75L3 17.25zM20.71 7.04c.39-.39.39-1.02 0-1.41l-2.34-2.34c-.39-.39-1.02-.39-1.41 0l-1.83 1.83 3.75 3.75 1.83-1.83z"/></svg>
<svg class="a" style="left:678.0px;top:1034.0px;" width="32" height="32" viewBox="0 0 24 24"><path fill="#757575" d="M6 19c0 1.1.9 2 2 2h8c1.1 0 2-.9 2-2V7H6v12zM19 4h-3.5l-1-1h-5l-1 1H5v2h14V4z"/></svg>
<div class="t" style="left:794.5px;top:1037.4px;font-size:21px;font-weight:400;color:#28548f;transform:scaleY(1.08);transform-origin:0 85%;text-decoration:underline;text-decoration-thickness:1.8px;text-underline-offset:1.6px">DOC-0000000013</div>
<div class="t" style="left:1107.0px;top:1037.9px;font-size:21px;font-weight:400;color:#242424;transform:scaleY(1.07);transform-origin:0 85%;letter-spacing:0.2px">401k matching</div>
<div class="t" style="left:1647.5px;top:1037.9px;font-size:21px;font-weight:400;color:#242424;transform:scaleY(1.08);transform-origin:0 85%;">Dorland, Chris</div>
<div class="hl" style="left:498px;top:1021.7px;width:1554px"></div>
<div class="card" style="left:497px;top:1087px;width:1585px;height:59px;border-radius:0 0 4px 4px;box-shadow:0 0 1px 1px #dedede,0 2px 0 0 #a9a9a9"></div>
<svg class="a" style="left:525.5px;top:1092.5px;" width="39" height="39" viewBox="0 0 24 24"><path fill="#242424" d="M17.65 6.35C16.2 4.9 14.21 4 12 4c-4.42 0-7.99 3.58-7.99 8s3.57 8 7.99 8c3.73 0 6.84-2.55 7.73-6h-2.08c-.82 2.33-3.04 4-5.65 4-3.31 0-6-2.69-6-6s2.69-6 6-6c1.66 0 3.14.69 4.22 1.78L13 11h7V4l-2.35 2.35z"/></svg>
<svg class="a" style="left:573.4px;top:1093.4px;" width="38" height="38" viewBox="0 0 24 24"><path fill="#242424" d="M19 9h-4V3H9v6H5l7 7 7-7zM5 18v2h14v-2H5z"/></svg>
<div class="t" style="left:1023.0px;top:1102.2px;font-size:21px;font-weight:400;color:#444;transform:scaleY(1.08);transform-origin:0 85%;">Rows Per Page:</div>
<div class="t" style="left:1199.0px;top:1102.6px;font-size:20.5px;font-weight:400;color:#444;transform:scaleY(1.12);transform-origin:0 85%;">25</div>
<svg class="a" style="left:1249.3px;top:1099.4px;transform:scale(1.5);transform-origin:50% 50%" width="24" height="24" viewBox="0 0 24 24"><path fill="#757575" d="M7 10l5 5 5-5z"/></svg>
<div class="a" style="left:1323.5px;top:1090px;width:171.5px;height:46px;border:1.5px solid #cfcfcf;border-radius:5px;background:#fff"></div>
<div class="t" style="left:1338.0px;top:1102.2px;font-size:21px;font-weight:400;color:#242424;transform:scaleY(1.08);transform-origin:0 85%;">1</div>
<div class="t" style="left:1502.0px;top:1102.2px;font-size:21.5px;font-weight:400;color:#333;transform:scaleY(1.06);transform-origin:0 85%;">-25 of 125832</div>
<svg class="a" style="left:1810.6px;top:1099.7px;" width="25.3" height="25.3" viewBox="0 0 24 24"><path fill="#242424" d="M18.41 16.59L13.82 12l4.59-4.59L17 6l-6 6 6 6zM6 6h2v12H6z"/></svg>
<svg class="a" style="left:1885.7px;top:1099.8px;" width="25" height="25" viewBox="0 0 24 24"><path fill="#242424" d="M15.41 7.41L14 6l-6 6 6 6 1.41-1.41L10.83 12z"/></svg>
<svg class="a" style="left:1959.0px;top:1099.8px;" width="25" height="25" viewBox="0 0 24 24"><path fill="#242424" d="M10 6L8.59 7.41 13.17 12l-4.58 4.59L10 18l6-6z"/></svg>
<svg class="a" style="left:2033.7px;top:1099.7px;" width="25.3" height="25.3" viewBox="0 0 24 24"><path fill="#242424" d="M5.59 7.41L10.18 12l-4.59 4.59L7 18l6-6-6-6zM16 6h2v12h-2z"/></svg>
<div class="gb" style="left:3px;top:42px;width:2099px;height:45px"></div>
<div class="gb" style="left:3px;top:92px;width:475px;height:1062px"></div>
<div class="gb" style="left:486px;top:92px;width:1616px;height:117px"></div>
<div class="gb" style="left:486px;top:220px;width:1616px;height:857px"></div>
<div class="gb" style="left:486px;top:1083px;width:1616px;height:71px"></div>
<div class="num" style="left:185px;top:0px"></div>
<svg class="a" style="left:185px;top:0px" width="86" height="86" viewBox="0 0 86 86"><path transform="translate(0 43)" d="M34 -13.7 L44.6 -13.7 L44.6 19.7" fill="none" stroke="#161616" stroke-width="3.4" stroke-linejoin="miter"/></svg>
<div class="num" style="left:361px;top:151px"></div>
<svg class="a" style="left:361px;top:151px" width="86" height="86" viewBox="0 0 86 86"><path transform="translate(0 43)" d="M32.5 -10.8 C35.5 -13.3 39 -14.6 43.5 -14.6 C50 -14.6 54 -10.8 54 -5.6 C54 -2 52.3 0.8 48.8 4.3 L34 17.3 L57.2 17.3" fill="none" stroke="#161616" stroke-width="3.4" stroke-linejoin="miter"/></svg>
<div class="num" style="left:937px;top:107px"></div>
<svg class="a" style="left:937px;top:107px" width="86" height="86" viewBox="0 0 86 86"><path transform="translate(0 43)" d="M33.2 -14.2 L53.6 -14.2 L42.3 0.9 C50 0.9 55 4 55 9.3 C55 14.6 50.5 17.8 44 17.8 C39.5 17.8 35.6 16.4 32.6 14" fill="none" stroke="#161616" stroke-width="3.4" stroke-linejoin="miter"/></svg>
<div class="num" style="left:704px;top:227px"></div>
<svg class="a" style="left:704px;top:227px" width="86" height="86" viewBox="0 0 86 86"><path transform="translate(0 43)" d="M47.8 -15.2 L28.8 8.5 L57.2 8.5 M48.7 -1 L48.7 19" fill="none" stroke="#161616" stroke-width="3.4" stroke-linejoin="miter"/></svg>
<div class="num" style="left:704px;top:1078px"></div>
<svg class="a" style="left:704px;top:1078px" width="86" height="86" viewBox="0 0 86 86"><path transform="translate(0 43)" d="M55.4 -14.6 L37.9 -14.6 L36.3 1.3 C38.5 0 41 -0.6 44 -0.6 C51.2 -0.6 56 3.4 56 8.9 C56 14 51.5 17 45 17 C39.6 17 35.6 15.5 32.6 13.6" fill="none" stroke="#161616" stroke-width="3.4" stroke-linejoin="miter"/></svg>
</body></html>
